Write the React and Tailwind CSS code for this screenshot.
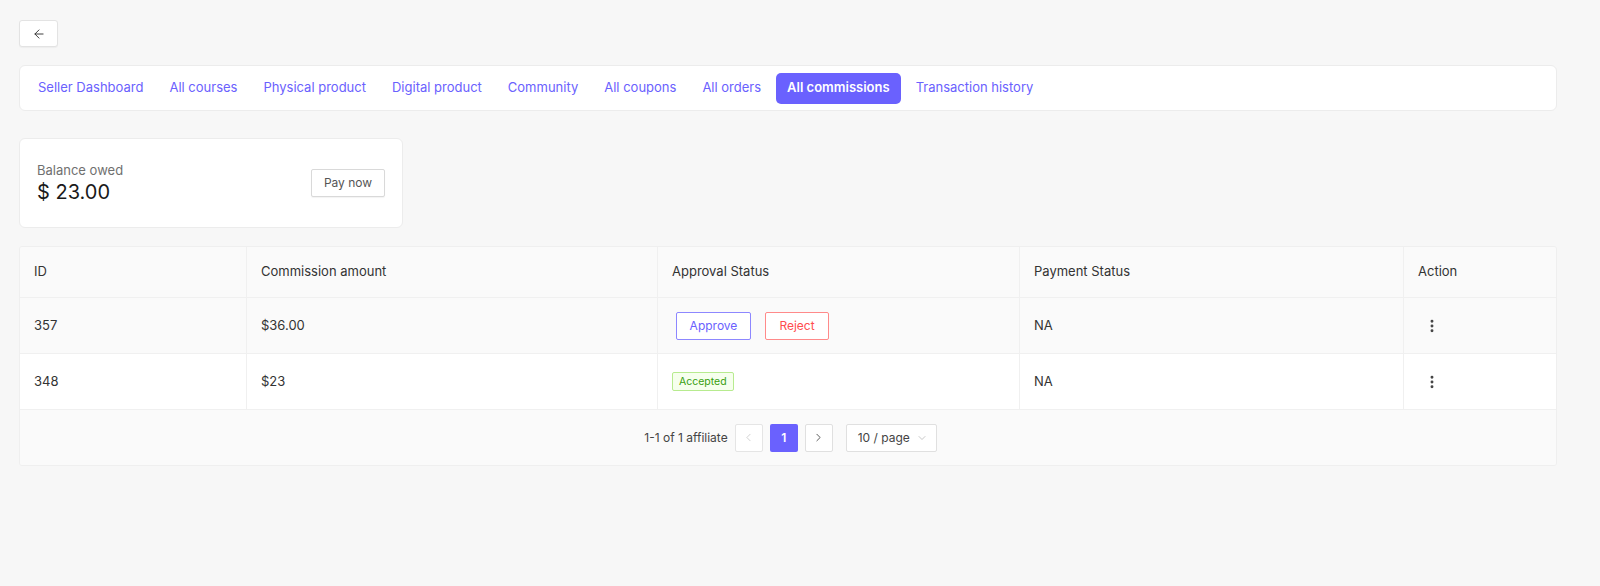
import { ArrowLeft, ChevronLeft, ChevronRight, ChevronDown, MoreVertical } from "lucide-react";

const tabs = [
    "Seller Dashboard",
    "All courses",
    "Physical product",
    "Digital product",
    "Community",
    "All coupons",
    "All orders",
    "All commissions",
    "Transaction history",
];

const rows = [
    { id: "357", amount: "$36.00", pending: true, payment: "NA" },
    { id: "348", amount: "$23", pending: false, payment: "NA" },
];

const cols = "grid grid-cols-[227px_411px_362px_384px_1fr]";

const App = () => {
    return (
        <div className="min-h-screen w-full bg-[#f7f7f7] pl-[19px] pr-[43px] pt-[20px] text-[#262626]" style={{ fontFamily: "Inter, 'Liberation Sans', sans-serif" }}>
            {/* back */}
            <button className="flex h-[27px] w-[39px] items-center justify-center rounded-[3px] border border-[#e3e3e3] bg-white shadow-[0_1px_1px_rgba(0,0,0,0.04)]">
                <ArrowLeft size={14} strokeWidth={1.6} className="text-[#333]" />
            </button>

            {/* tabs */}
            <div className="mt-[18px] flex h-[46px] items-center gap-[4px] rounded-[6px] border border-[#ececec] bg-white px-[7px]">
                {tabs.map((t) =>
                    t === "All commissions" ? (
                        <div key={t} className="flex h-[31px] items-center rounded-[5px] bg-[#6a61fe] px-[11px] text-[13px] font-semibold text-white">
                            {t}
                        </div>
                    ) : (
                        <div key={t} className="flex h-[31px] items-center px-[11px] text-[13px] text-[#6a61fe]">
                            {t}
                        </div>
                    )
                )}
            </div>

            {/* balance */}
            <div className="mt-[27px] flex h-[90px] w-[384px] items-center justify-between rounded-[6px] border border-[#ececec] bg-white pl-[17px] pr-[17px]">
                <div className="flex flex-col">
                    <span className="text-[13px] leading-[18px] text-[#707070]">Balance owed</span>
                    <span className="text-[20px] leading-[26px] text-[#1a1a1a]">$ 23.00</span>
                </div>
                <button className="h-[28px] w-[74px] rounded-[2px] border border-[#d9d9d9] bg-white text-[12px] text-[#555] shadow-[0_1px_1px_rgba(0,0,0,0.05)]">
                    Pay now
                </button>
            </div>

            {/* table */}
            <div className="mt-[18px] overflow-hidden rounded-[3px] border border-[#efefef] text-[13px] text-[#333]">
                <div className={`${cols} h-[50px] bg-[#fafafa]`}>
                    {["ID", "Commission amount", "Approval Status", "Payment Status", "Action"].map((h, i) => (
                        <div key={h} className={`flex items-center px-[14px] ${i < 4 ? "border-r border-[#f0f0f0]" : ""}`}>
                            {h}
                        </div>
                    ))}
                </div>
                {rows.map((r, idx) => (
                    <div key={r.id} className={`${cols} h-[56px] border-t border-[#f0f0f0] ${idx === 0 ? "bg-[#fafafa]" : "bg-white"}`}>
                        <div className="flex items-center border-r border-[#f0f0f0] px-[14px]">{r.id}</div>
                        <div className="flex items-center border-r border-[#f0f0f0] px-[14px]">{r.amount}</div>
                        <div className="flex items-center border-r border-[#f0f0f0] px-[14px]">
                            {r.pending ? (
                                <div className="ml-[4px] flex gap-[14px]">
                                    <button className="h-[28px] w-[75px] rounded-[2px] border border-[#8d87ff] bg-white text-[12px] text-[#6a61fe]">Approve</button>
                                    <button className="h-[28px] w-[64px] rounded-[2px] border border-[#ff8a8a] bg-white text-[12px] text-[#ff4d4f]">Reject</button>
                                </div>
                            ) : (
                                <span className="rounded-[2px] border border-[#b7eb8f] bg-[#f6ffed] px-[6px] py-[2px] text-[10.5px] leading-[13px] text-[#389e0d]">Accepted</span>
                            )}
                        </div>
                        <div className="flex items-center border-r border-[#f0f0f0] px-[14px]">{r.payment}</div>
                        <div className="flex items-center px-[20px]">
                            <MoreVertical size={16} strokeWidth={2.4} className="text-[#444]" />
                        </div>
                    </div>
                ))}
                <div className="flex h-[56px] items-center justify-center border-t border-[#f0f0f0] bg-[#fafafa] pl-[5px]">
                    <span className="mr-[7px] text-[12px] text-[#444]">1-1 of 1 affiliate</span>
                    <div className="flex h-[28px] w-[28px] items-center justify-center rounded-[2px] border border-[#e5e5e5] bg-white">
                        <ChevronLeft size={13} strokeWidth={1.4} className="text-[#c4c4c4]" />
                    </div>
                    <div className="ml-[7px] flex h-[28px] w-[28px] items-center justify-center rounded-[2px] bg-[#6a61fe] text-[12px] font-semibold text-white">1</div>
                    <div className="ml-[7px] flex h-[28px] w-[28px] items-center justify-center rounded-[2px] border border-[#e0e0e0] bg-white">
                        <ChevronRight size={13} strokeWidth={1.6} className="text-[#444]" />
                    </div>
                    <div className="ml-[13px] flex h-[28px] w-[91px] items-center justify-between rounded-[2px] border border-[#e0e0e0] bg-white pl-[11px] pr-[8px] text-[12px] text-[#444]">
                        <span>10 / page</span>
                        <ChevronDown size={12} strokeWidth={1.3} className="text-[#aaa]" />
                    </div>
                </div>
            </div>
        </div>
    );
};

export default App;
